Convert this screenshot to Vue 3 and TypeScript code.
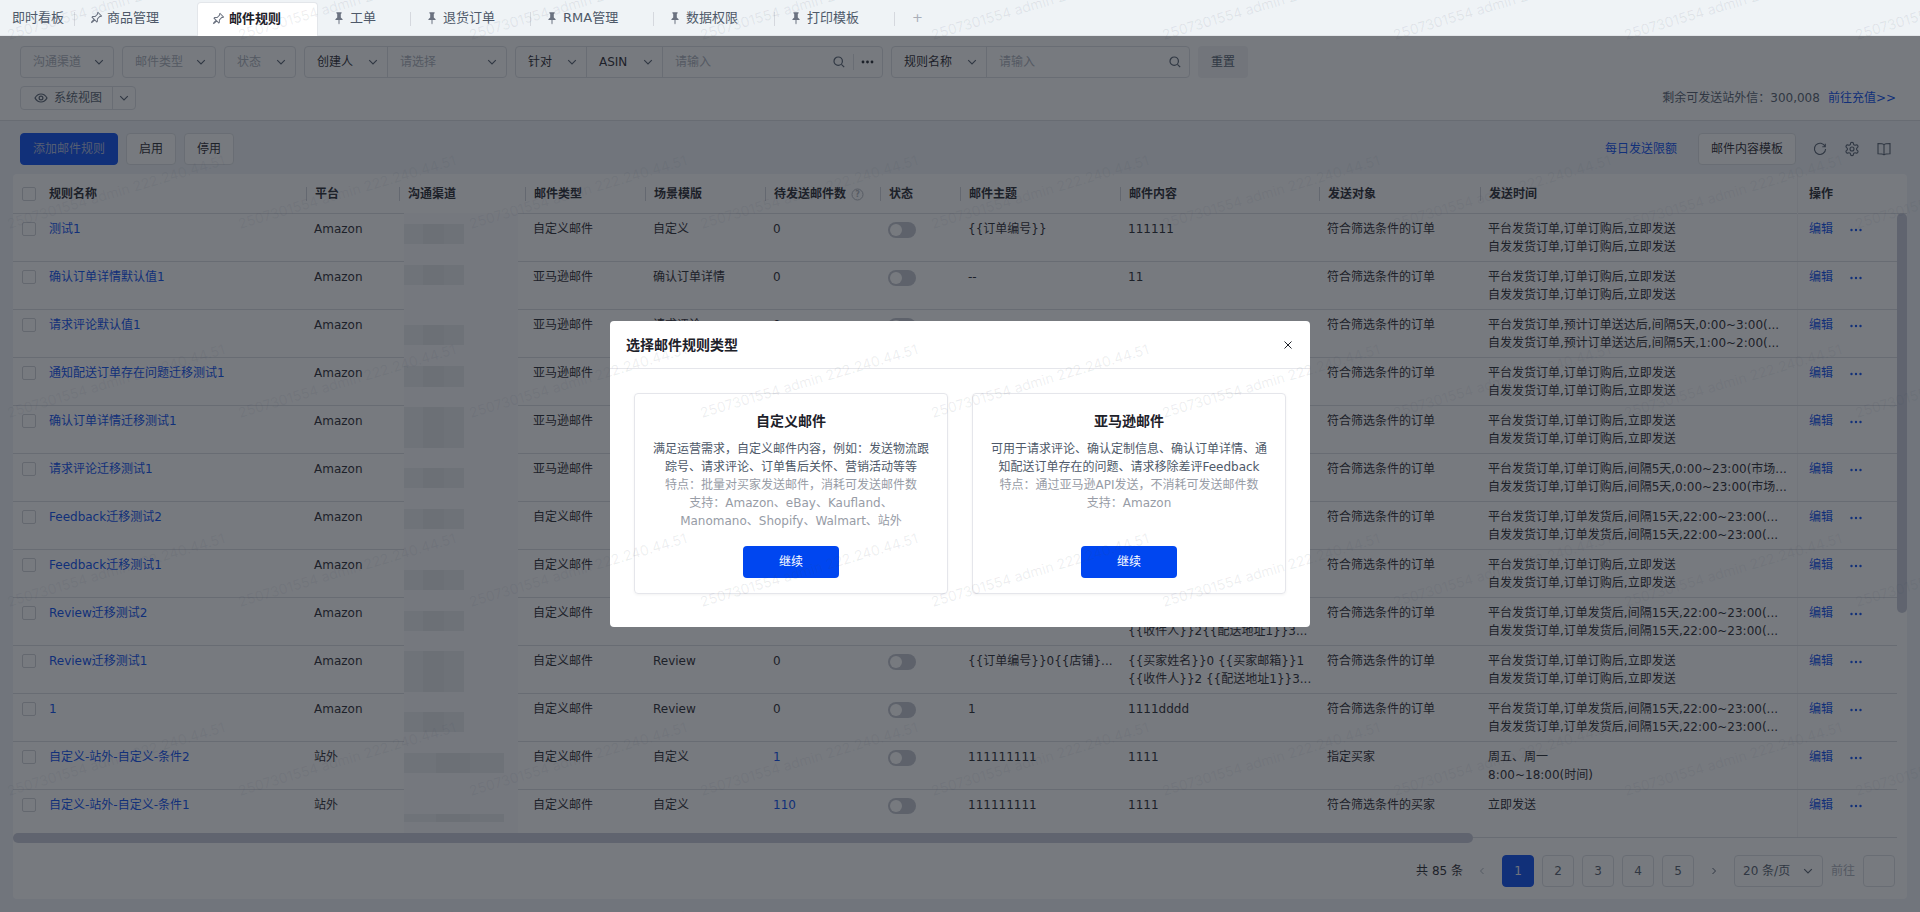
<script setup lang="ts">
interface Tab { label: string; pin: 'none' | 'outline' | 'solid'; width: number; active?: boolean }
interface Row {
  name: string; platform: string; type: string; scene: string; count: string; countLink?: boolean;
  subject: string; content: string[]; target: string; time: string[];
}
const tabs: Tab[] = [
  { label: '即时看板', pin: 'none', width: 75 },
  { label: '商品管理', pin: 'outline', width: 122 },
  { label: '邮件规则', pin: 'outline', width: 121, active: true },
  { label: '工单', pin: 'solid', width: 93 },
  { label: '退货订单', pin: 'solid', width: 120 },
  { label: 'RMA管理', pin: 'solid', width: 123 },
  { label: '数据权限', pin: 'solid', width: 121 },
  { label: '打印模板', pin: 'solid', width: 120 },
]
const buy = ['平台发货订单,订单订购后,立即发送', '自发发货订单,订单订购后,立即发送']
const ship15 = ['平台发货订单,订单发货后,间隔15天,22:00~23:00(...', '自发发货订单,订单发货后,间隔15天,22:00~23:00(...']
const T = '符合筛选条件的订单'
const rows: Row[] = [
  { name: '测试1', platform: 'Amazon', type: '自定义邮件', scene: '自定义', count: '0', subject: '{{订单编号}}', content: ['111111'], target: T, time: buy },
  { name: '确认订单详情默认值1', platform: 'Amazon', type: '亚马逊邮件', scene: '确认订单详情', count: '0', subject: '--', content: ['11'], target: T, time: buy },
  { name: '请求评论默认值1', platform: 'Amazon', type: '亚马逊邮件', scene: '请求评论', count: '0', subject: '--', content: ['--'], target: T, time: ['平台发货订单,预计订单送达后,间隔5天,0:00~3:00(...', '自发发货订单,预计订单送达后,间隔5天,1:00~2:00(...'] },
  { name: '通知配送订单存在问题迁移测试1', platform: 'Amazon', type: '亚马逊邮件', scene: '通知配送', count: '0', subject: '--', content: ['--'], target: T, time: buy },
  { name: '确认订单详情迁移测试1', platform: 'Amazon', type: '亚马逊邮件', scene: '确认订单详情', count: '0', subject: '--', content: ['--'], target: T, time: buy },
  { name: '请求评论迁移测试1', platform: 'Amazon', type: '亚马逊邮件', scene: '请求评论', count: '0', subject: '--', content: ['--'], target: T, time: ['平台发货订单,订单订购后,间隔5天,0:00~23:00(市场...', '自发发货订单,订单订购后,间隔5天,0:00~23:00(市场...'] },
  { name: 'Feedback迁移测试2', platform: 'Amazon', type: '自定义邮件', scene: 'Feedback', count: '0', subject: '1', content: ['1'], target: T, time: ship15 },
  { name: 'Feedback迁移测试1', platform: 'Amazon', type: '自定义邮件', scene: 'Feedback', count: '0', subject: '1', content: ['1'], target: T, time: buy },
  { name: 'Review迁移测试2', platform: 'Amazon', type: '自定义邮件', scene: 'Review', count: '0', subject: '1', content: ['{{买家姓名}}0{{买家邮箱}}1', '{{收件人}}2{{配送地址1}}3...'], target: T, time: ship15 },
  { name: 'Review迁移测试1', platform: 'Amazon', type: '自定义邮件', scene: 'Review', count: '0', subject: '{{订单编号}}0{{店铺}...', content: ['{{买家姓名}}0 {{买家邮箱}}1', '{{收件人}}2 {{配送地址1}}3...'], target: T, time: buy },
  { name: '1', platform: 'Amazon', type: '自定义邮件', scene: 'Review', count: '0', subject: '1', content: ['1111dddd'], target: T, time: ship15 },
  { name: '自定义-站外-自定义-条件2', platform: '站外', type: '自定义邮件', scene: '自定义', count: '1', countLink: true, subject: '111111111', content: ['1111'], target: '指定买家', time: ['周五、周一', '8:00~18:00(时间)'] },
  { name: '自定义-站外-自定义-条件1', platform: '站外', type: '自定义邮件', scene: '自定义', count: '110', countLink: true, subject: '111111111', content: ['1111'], target: '符合筛选条件的买家', time: ['立即发送'] },
]
const heads = ['规则名称', '平台', '沟通渠道', '邮件类型', '场景模版', '待发送邮件数', '状态', '邮件主题', '邮件内容', '发送对象', '发送时间']
// mosaic pieces that cover the channel column: [top, height, width]
const blocks: [number, number, number][] = [
  [11, 20, 60], [52, 20, 60], [112, 20, 60], [153, 21, 60], [194, 41, 60], [255, 20, 60],
  [296, 20, 60], [357, 20, 60], [398, 20, 60], [438, 41, 60], [499, 20, 60], [540, 20, 100], [601, 8, 100],
]
const marks = Array.from({ length: 54 }, (_, i) => i)
const pages = ['1', '2', '3', '4', '5']
</script>

<template>
  <div class="root">
    <svg class="defs" width="0" height="0" aria-hidden="true">
      <symbol id="chev" viewBox="0 0 12 12"><path d="M2.2 4.2 6 8l3.8-3.8" fill="none" stroke="currentColor" stroke-width="1.1" /></symbol>
      <symbol id="search" viewBox="0 0 14 14"><circle cx="6.2" cy="6.2" r="4.2" fill="none" stroke="currentColor" stroke-width="1.2" /><path d="m9.4 9.4 2.8 2.8" stroke="currentColor" stroke-width="1.2" /></symbol>
      <symbol id="pin" viewBox="0 0 14 14"><path d="M4.4 1.2h5.2v1l-.8.7v3.5l1.8 1.8v.9H7.5v3.4l-.5 1-.5-1V9.1H3.4v-.9l1.8-1.8V2.9l-.8-.7z" fill="currentColor" /></symbol>
      <symbol id="pino" viewBox="0 0 14 14"><path transform="rotate(45 7 7)" d="M4.6 1.6h4.8v.8l-.8.7v3.5l1.8 1.8v.8H7.4v3.2L7 13.2l-.4-.8V9.2H3.6v-.8l1.8-1.8V3.1l-.8-.7z" fill="none" stroke="currentColor" stroke-width="1" /></symbol>
    </svg>

    <header class="tabs">
      <div v-for="t in tabs" :key="t.label" class="tab" :class="{ on: t.active, first: t.pin === 'none' }" :style="{ width: t.width + 'px' }">
        <svg v-if="t.pin !== 'none'" class="pin" width="14" height="14"><use :href="t.pin === 'solid' ? '#pin' : '#pino'" /></svg>
        <span>{{ t.label }}</span>
      </div>
      <span class="plus">+</span>
    </header>

    <section class="filters">
      <div class="frow">
        <div class="sel ph w94"><span>沟通渠道</span><svg width="12" height="12"><use href="#chev" /></svg></div>
        <div class="sel ph w94"><span>邮件类型</span><svg width="12" height="12"><use href="#chev" /></svg></div>
        <div class="sel ph w72"><span>状态</span><svg width="12" height="12"><use href="#chev" /></svg></div>
        <div class="combo w203">
          <div class="part p83"><span>创建人</span><svg width="12" height="12"><use href="#chev" /></svg></div>
          <div class="part grow ph"><span>请选择</span><svg width="12" height="12"><use href="#chev" /></svg></div>
        </div>
        <div class="combo w368">
          <div class="part p71"><span>针对</span><svg width="12" height="12"><use href="#chev" /></svg></div>
          <div class="part p77"><span>ASIN</span><svg width="12" height="12"><use href="#chev" /></svg></div>
          <div class="part grow ph">
            <span>请输入</span>
            <svg class="srch" width="14" height="14"><use href="#search" /></svg>
            <i class="vline"></i>
            <svg class="more" width="13" height="4" viewBox="0 0 13 4"><circle cx="2" cy="2" r="1.400" /><circle cx="6.500" cy="2" r="1.400" /><circle cx="11" cy="2" r="1.400" /></svg>
          </div>
        </div>
        <div class="combo w299">
          <div class="part p95"><span>规则名称</span><svg width="12" height="12"><use href="#chev" /></svg></div>
          <div class="part grow ph"><span>请输入</span><svg class="srch" width="14" height="14"><use href="#search" /></svg></div>
        </div>
        <button class="reset">重置</button>
      </div>
      <div class="frow second">
        <div class="view">
          <div class="viewl">
            <svg width="14" height="14" viewBox="0 0 14 14"><path d="M1 7c1.500-2.700 3.500-4 6-4s4.500 1.300 6 4c-1.500 2.700-3.500 4-6 4S2.500 9.700 1 7z" fill="none" stroke="currentColor" stroke-width="1.200" /><circle cx="7" cy="7" r="1.900" fill="none" stroke="currentColor" stroke-width="1.200" /></svg>
            <span>系统视图</span>
          </div>
          <div class="viewr"><svg width="12" height="12"><use href="#chev" /></svg></div>
        </div>
        <div class="quota">剩余可发送站外信：300,008<a>前往充值&gt;&gt;</a></div>
      </div>
    </section>

    <section class="toolbar">
      <button class="btn primary">添加邮件规则</button>
      <button class="btn">启用</button>
      <button class="btn">停用</button>
      <div class="spacer"></div>
      <a class="limit">每日发送限额</a>
      <button class="btn tpl">邮件内容模板</button>
      <svg class="tool" width="16" height="16" viewBox="0 0 16 16"><path d="M13.100 5.500A5.600 5.600 0 1 0 13.600 8M13.300 2.800v3h-3" fill="none" stroke="currentColor" stroke-width="1.100" /></svg>
      <svg class="tool" width="16" height="16" viewBox="0 0 24 24"><path d="M12.220 2h-.44a2 2 0 0 0-2 2v.18a2 2 0 0 1-1 1.730l-.43.25a2 2 0 0 1-2 0l-.15-.08a2 2 0 0 0-2.730.73l-.22.38a2 2 0 0 0 .73 2.730l.15.1a2 2 0 0 1 1 1.720v.51a2 2 0 0 1-1 1.740l-.15.09a2 2 0 0 0-.73 2.730l.22.38a2 2 0 0 0 2.730.73l.15-.08a2 2 0 0 1 2 0l.43.25a2 2 0 0 1 1 1.730V20a2 2 0 0 0 2 2h.44a2 2 0 0 0 2-2v-.18a2 2 0 0 1 1-1.730l.43-.25a2 2 0 0 1 2 0l.15.08a2 2 0 0 0 2.730-.73l.22-.39a2 2 0 0 0-.73-2.730l-.15-.08a2 2 0 0 1-1-1.740v-.5a2 2 0 0 1 1-1.740l.15-.09a2 2 0 0 0 .73-2.730l-.22-.38a2 2 0 0 0-2.730-.73l-.15.08a2 2 0 0 1-2 0l-.43-.25a2 2 0 0 1-1-1.730V4a2 2 0 0 0-2-2z" fill="none" stroke="currentColor" stroke-width="1.700" /><circle cx="12" cy="12" r="3" fill="none" stroke="currentColor" stroke-width="1.700" /></svg>
      <svg class="tool last" width="16" height="16" viewBox="0 0 16 16"><path d="M8 3.600C7 2.700 5.500 2.500 2 2.500v10.300c3.500 0 5 .2 6 1 1-.8 2.500-1 6-1V2.500c-3.500 0-5 .2-6 1.100zM8 3.600v10.200" fill="none" stroke="currentColor" stroke-width="1.100" /></svg>
    </section>

    <section class="card">
      <div class="thead grid">
        <div class="c chk"><i class="box"></i></div>
        <div v-for="h in heads" :key="h" class="c th">
          {{ h }}
          <svg v-if="h === '待发送邮件数'" class="q" width="13" height="13" viewBox="0 0 13 13"><circle cx="6.500" cy="6.500" r="5.500" fill="none" stroke="currentColor" /><text x="6.500" y="9.300" text-anchor="middle" font-size="8" fill="currentColor">?</text></svg>
        </div>
        <div class="c op opth">操作</div>
      </div>
      <div v-for="r in rows" :key="r.name" class="tr grid">
        <div class="c chk"><i class="box"></i></div>
        <div class="c link">{{ r.name }}</div>
        <div class="c">{{ r.platform }}</div>
        <div class="c"></div>
        <div class="c">{{ r.type }}</div>
        <div class="c">{{ r.scene }}</div>
        <div class="c" :class="{ link: r.countLink }">{{ r.count }}</div>
        <div class="c"><i class="sw"><b></b></i></div>
        <div class="c">{{ r.subject }}</div>
        <div class="c"><div v-for="l in r.content" :key="l">{{ l }}</div></div>
        <div class="c">{{ r.target }}</div>
        <div class="c"><div v-for="l in r.time" :key="l">{{ l }}</div></div>
        <div class="c op">
          <a class="link">编辑</a>
          <svg class="dots" width="12" height="4" viewBox="0 0 12 4"><circle cx="1.500" cy="2" r="1.200" /><circle cx="6" cy="2" r="1.200" /><circle cx="10.500" cy="2" r="1.200" /></svg>
        </div>
      </div>

      <div class="pager">
        <span class="total">共 85 条</span>
        <svg class="arrow" width="10" height="10" viewBox="0 0 10 10"><path d="M6.500 2 3.500 5l3 3" fill="none" stroke="currentColor" /></svg>
        <span v-for="(p, i) in pages" :key="p" class="pg" :class="{ cur: i === 0 }">{{ p }}</span>
        <svg class="arrow dark" width="10" height="10" viewBox="0 0 10 10"><path d="M3.500 2l3 3-3 3" fill="none" stroke="currentColor" /></svg>
        <div class="size"><span>20 条/页</span><svg width="12" height="12"><use href="#chev" /></svg></div>
        <span class="goto">前往</span>
        <span class="pg jump"></span>
      </div>

      <div class="mosaic">
        <i v-for="b in blocks" :key="b[0]" :style="{ top: b[0] + 'px', height: b[1] + 'px', width: b[2] + 'px' }"></i>
      </div>
      <div class="vbar"></div>
      <div class="hbar"></div>
    </section>

    <div class="mask">
      <div class="modal">
        <div class="mhead">
          <span>选择邮件规则类型</span>
          <svg width="12" height="12" viewBox="0 0 12 12"><path d="m2.500 2.500 7 7M9.500 2.500l-7 7" fill="none" stroke="currentColor" stroke-width="1" /></svg>
        </div>
        <div class="mbody">
          <div class="opt">
            <h3>自定义邮件</h3>
            <div class="desc">
              <p>满足运营需求，自定义邮件内容，例如：发送物流跟踪号、请求评论、订单售后关怀、营销活动等等</p>
              <p class="mute">特点：批量对买家发送邮件，消耗可发送邮件数</p>
              <p class="mute">支持：Amazon、eBay、Kaufland、<br />Manomano、Shopify、Walmart、站外</p>
            </div>
            <button class="go">继续</button>
          </div>
          <div class="opt">
            <h3>亚马逊邮件</h3>
            <div class="desc">
              <p>可用于请求评论、确认定制信息、确认订单详情、通知配送订单存在的问题、请求移除差评Feedback</p>
              <p class="mute">特点：通过亚马逊API发送，不消耗可发送邮件数</p>
              <p class="mute">支持：Amazon</p>
            </div>
            <button class="go">继续</button>
          </div>
        </div>
      </div>
    </div>

    <div class="marks" aria-hidden="true">
      <span v-for="m in marks" :key="m"><em>2507301554 admin 222.240.44.51</em></span>
    </div>
  </div>
</template>

<style scoped>
* { box-sizing: border-box; }
.root {
  position: relative; width: 1920px; height: 912px; overflow: hidden; background: #f0f3f8;
  font: 12px/18px "DejaVu Sans", "Noto Sans CJK SC", sans-serif; color: #1d2129;
}
.defs { position: absolute; }
button { font: inherit; }
p { margin: 0; }
svg { flex: none; display: block; }

.tabs { height: 36px; display: flex; align-items: flex-end; background: #eff3f6; border-bottom: 1px solid #e3e6ea; font-size: 13px; color: #4e5969; }
.tab { height: 33px; display: flex; align-items: center; gap: 4px; padding: 0 0 1px 14px; position: relative; }
.tab.first { padding-left: 12px; }
.tab::after { content: ""; position: absolute; right: 0; top: 10px; height: 14px; width: 1px; background: #d5d8de; }
.tab.on { background: #fff; height: 34px; margin-bottom: -1px; border: 1px solid #e3e6ea; border-bottom: 0; border-radius: 4px 4px 0 0; color: #1d2129; font-weight: 600; padding-left: 13px; }
.tab.on::after, .tab:nth-child(2)::after { display: none; }
.pin { color: #6b7280; }
.plus { margin-left: 17px; margin-bottom: 8px; color: #a9aeb8; font-size: 13px; }

.filters { height: 85px; background: #fff; border-bottom: 1px solid #d9dce1; padding: 10px 20px 0; }
.frow { display: flex; gap: 8px; }
.second { margin-top: 8px; justify-content: space-between; align-items: center; height: 24px; padding-right: 4px; }
.sel, .combo { height: 32px; border: 1px solid #dcdfe4; border-radius: 4px; display: flex; align-items: center; }
.sel { justify-content: space-between; padding: 0 8px 0 12px; }
.ph { color: #a9aeb8; }
.w94 { width: 94px; } .w72 { width: 72px; } .w203 { width: 203px; } .w368 { width: 368px; } .w299 { width: 299px; }
.part { height: 100%; display: flex; align-items: center; justify-content: space-between; padding: 0 8px 0 12px; border-right: 1px solid #dcdfe4; }
.part svg { color: #4e5969; }
.sel svg { color: #4e5969; }
.part:last-child { border-right: 0; }
.p83 { width: 83px; } .p71 { width: 71px; } .p77 { width: 76px; } .p95 { width: 95px; }
.grow { flex: 1; }
.grow span:first-child { margin-right: auto; }
.srch { color: #4e5969; margin-right: -1px; }
.vline { width: 1px; height: 16px; background: #dcdfe4; margin: 0 7px 0 8px; }
.more { fill: #1d2129; }
.reset { width: 50px; height: 32px; border: 0; border-radius: 4px; background: #f2f3f5; color: #4e5969; }
.view { width: 116px; height: 24px; border: 1px solid #dcdfe4; border-radius: 4px; display: flex; }
.viewl { flex: 1; display: flex; align-items: center; gap: 6px; padding-left: 13px; border-right: 1px solid #dcdfe4; color: #4e5969; }
.viewr { width: 22px; display: flex; align-items: center; justify-content: center; color: #4e5969; }
.quota { color: #4e5969; }
.quota a { color: #0046f0; margin-left: 8px; }

.toolbar { display: flex; align-items: center; gap: 8px; padding: 12px 0 0 20px; height: 44px; }
.btn { height: 32px; width: 50px; padding: 0; border: 1px solid #dcdfe4; border-radius: 4px; background: #fff; color: #1d2129; }
.primary { width: 98px; background: #0046f0; border-color: #0046f0; color: #a9b8e0; }
.spacer { flex: 1; }
.limit { color: #0046f0; margin-right: 13px; }
.tpl { width: 98px; }
.tool { margin-left: 8px; color: #4e5969; }
.last { margin-right: 28px; }

.card { position: relative; margin: 9px 0 0 13px; width: 1894px; height: 725px; background: #fff; border-radius: 4px; }
.grid { display: grid; grid-template-columns: 28px 265px 93px 126px 120px 120px 115px 80px 160px 199px 161px 317px 100px; width: 1884px; }
.thead { height: 40px; width: 1894px; grid-template-columns: 28px 265px 93px 126px 120px 120px 115px 80px 160px 199px 161px 317px 110px; border-bottom: 1px solid #d9dce1; align-items: center; }
.tr { height: 48px; border-bottom: 1px solid #d9dce1; }
.c { padding: 6px 8px 0; white-space: nowrap; overflow: hidden; min-width: 0; }
.th { padding: 0 8px; font-weight: 600; position: relative; display: flex; align-items: center; gap: 5px; height: 14px; overflow: visible; border-left: 1px solid #d0d3d9; }
.th:nth-child(2) { border-left: 0; }
.chk { padding: 8px 0 0 9px; }
.thead .chk { padding: 0 0 0 9px; }
.box { display: block; width: 14px; height: 14px; border: 1px solid #cfd2d8; border-radius: 2px; }
.link { color: #0046f0; }
.sw { display: block; width: 28px; height: 16px; margin-top: 2px; border-radius: 8px; background: #c0c3cd; position: relative; }
.sw b { position: absolute; left: 2px; top: 2px; width: 12px; height: 12px; border-radius: 50%; background: #fff; }
.op { padding-left: 11px; border-left: 1px solid #f2f3f5; display: flex; gap: 17px; align-items: flex-start; }
.opth { padding: 0 0 0 11px; font-weight: 600; height: 40px; align-items: center; }
.dots { fill: #0046f0; margin-top: 8px; }
.q { color: #b0b4bc; }

.pager { display: flex; align-items: center; height: 32px; margin-top: 17px; padding-right: 12px; justify-content: flex-end; color: #4e5969; }
.total { margin-right: 14px; color: #1d2129; }
.arrow { color: #a9aeb8; margin-right: 15px; }
.dark { color: #4e5969; margin: 0 15px 0 15px; }
.pg { width: 32px; height: 32px; border: 1px solid #dcdfe4; border-radius: 4px; margin-right: 8px; display: flex; align-items: center; justify-content: center; }
.pg:nth-of-type(6) { margin-right: 0; }
.cur { background: #0046f0; border-color: #0046f0; color: #e8ecf8; }
.size { width: 89px; height: 32px; border: 1px solid #dcdfe4; border-radius: 4px; display: flex; align-items: center; justify-content: space-between; padding: 0 8px; }
.goto { width: 25px; margin: 0 7px 0 8px; color: #a9aeb8; }
.jump { margin: 0; }

.mosaic { position: absolute; left: 391px; top: 39px; width: 114px; height: 625px; background: #fbfbfc; }
.mosaic i { position: absolute; left: 0; background: linear-gradient(90deg, #eceef0 0 32%, #e3e5e8 32% 66%, #e9ebee 66%); }
.vbar { position: absolute; right: 0; top: 39px; width: 10px; height: 400px; border-radius: 5px; background: #c6c9d6; }
.hbar { position: absolute; left: 0; top: 659px; width: 1460px; height: 10px; border-radius: 5px; background: #c6c9d6; }

.mask { position: absolute; left: 0; right: 0; top: 36px; bottom: 0; background: rgba(29, 33, 41, .6); display: flex; align-items: center; justify-content: center; }
.modal { width: 700px; height: 306px; background: #fff; border-radius: 4px; }
.mhead { height: 48px; display: flex; align-items: center; justify-content: space-between; padding: 0 16px; border-bottom: 1px solid #e5e6eb; font-size: 14px; font-weight: 600; }
.mbody { display: flex; gap: 24px; padding: 24px; }
.opt { flex: 1; height: 201px; border: 1px solid #e5e6eb; border-radius: 4px; padding: 17px 16px 0; text-align: center; box-shadow: 0 1px 3px rgba(0, 0, 0, .05); }
.opt h3 { margin: 0 0 9px; font-size: 14px; line-height: 20px; font-weight: 600; }
.desc { height: 90px; color: #4e5969; }
.mute { color: #979ca6; }
.go { display: block; width: 96px; height: 32px; margin: 16px auto 0; border: 0; border-radius: 4px; background: #0046f0; color: #fff; }

.marks { position: absolute; left: 0; top: -92px; width: 2079px; display: grid; grid-template-columns: repeat(9, 231px); grid-auto-rows: 189px; pointer-events: none; font-family: Inter, sans-serif; }
.marks span { display: flex; align-items: center; justify-content: center; }
.marks em { font-style: normal; font-size: 14px; white-space: nowrap; color: rgba(60, 70, 90, .09); transform: rotate(-16.500deg); }
</style>
